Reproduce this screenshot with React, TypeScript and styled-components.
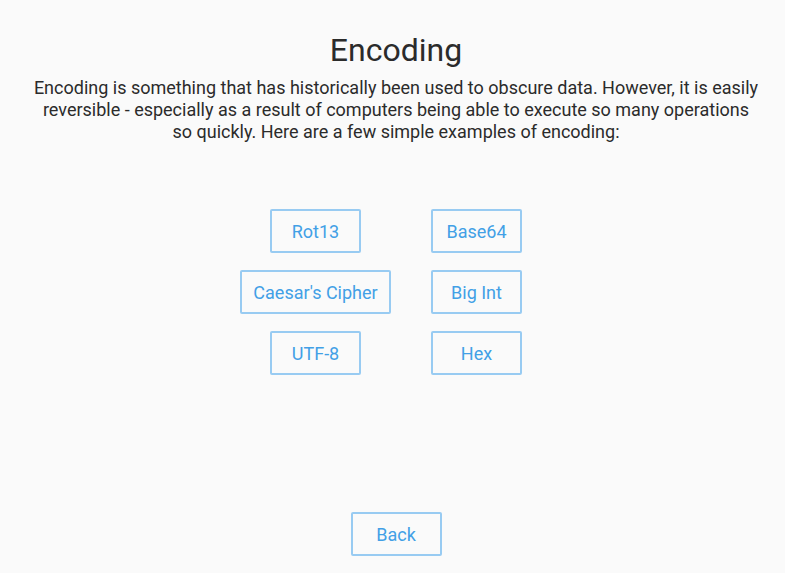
import React from "react";
import styled, { createGlobalStyle } from "styled-components";

const Global = createGlobalStyle`
  html, body { margin: 0; padding: 0; background: #fafafa; }
  body { font-family: Roboto, "Noto Sans", sans-serif; }
`;

const Page = styled.div`
  box-sizing: border-box;
  width: 785px;
  height: 573px;
  padding: 30px 20px 0 27px;
  display: flex;
  flex-direction: column;
  align-items: center;
`;

const Title = styled.h1`
  margin: 0;
  font-size: 32px;
  font-weight: 400;
  line-height: 40px;
  color: #2b2b2b;
`;

const Intro = styled.p`
  margin: 7px 0 0;
  font-size: 18px;
  line-height: 22px;
  color: #2b2b2b;
  text-align: center;
`;

const Grid = styled.div`
  margin-top: 66px;
  display: grid;
  grid-template-columns: 161px 161px;
  row-gap: 17px;
  justify-items: center;
`;

const Button = styled.button<{ $wide?: boolean }>`
  box-sizing: border-box;
  width: ${(p) => (p.$wide ? "151px" : "91px")};
  height: 44px;
  border: 2px solid #98cbf2;
  border-radius: 2px;
  background: transparent;
  color: #42a0e6;
  font-family: Roboto, "Noto Sans", sans-serif;
  font-size: 18px;
  padding: 0;
  cursor: pointer;
`;

const Footer = styled.div`
  margin-top: auto;
  margin-bottom: 17px;
`;

export default function App() {
  return (
    <>
      <Global />
      <Page>
        <Title>Encoding</Title>
        <Intro>
          Encoding is something that has historically been used to obscure data. However, it is easily
          <br />
          reversible - especially as a result of computers being able to execute so many operations
          <br />
          so quickly. Here are a few simple examples of encoding:
        </Intro>
        <Grid>
          <Button>Rot13</Button>
          <Button>Base64</Button>
          <Button $wide>Caesar's Cipher</Button>
          <Button>Big Int</Button>
          <Button>UTF-8</Button>
          <Button>Hex</Button>
        </Grid>
        <Footer>
          <Button>Back</Button>
        </Footer>
      </Page>
    </>
  );
}
